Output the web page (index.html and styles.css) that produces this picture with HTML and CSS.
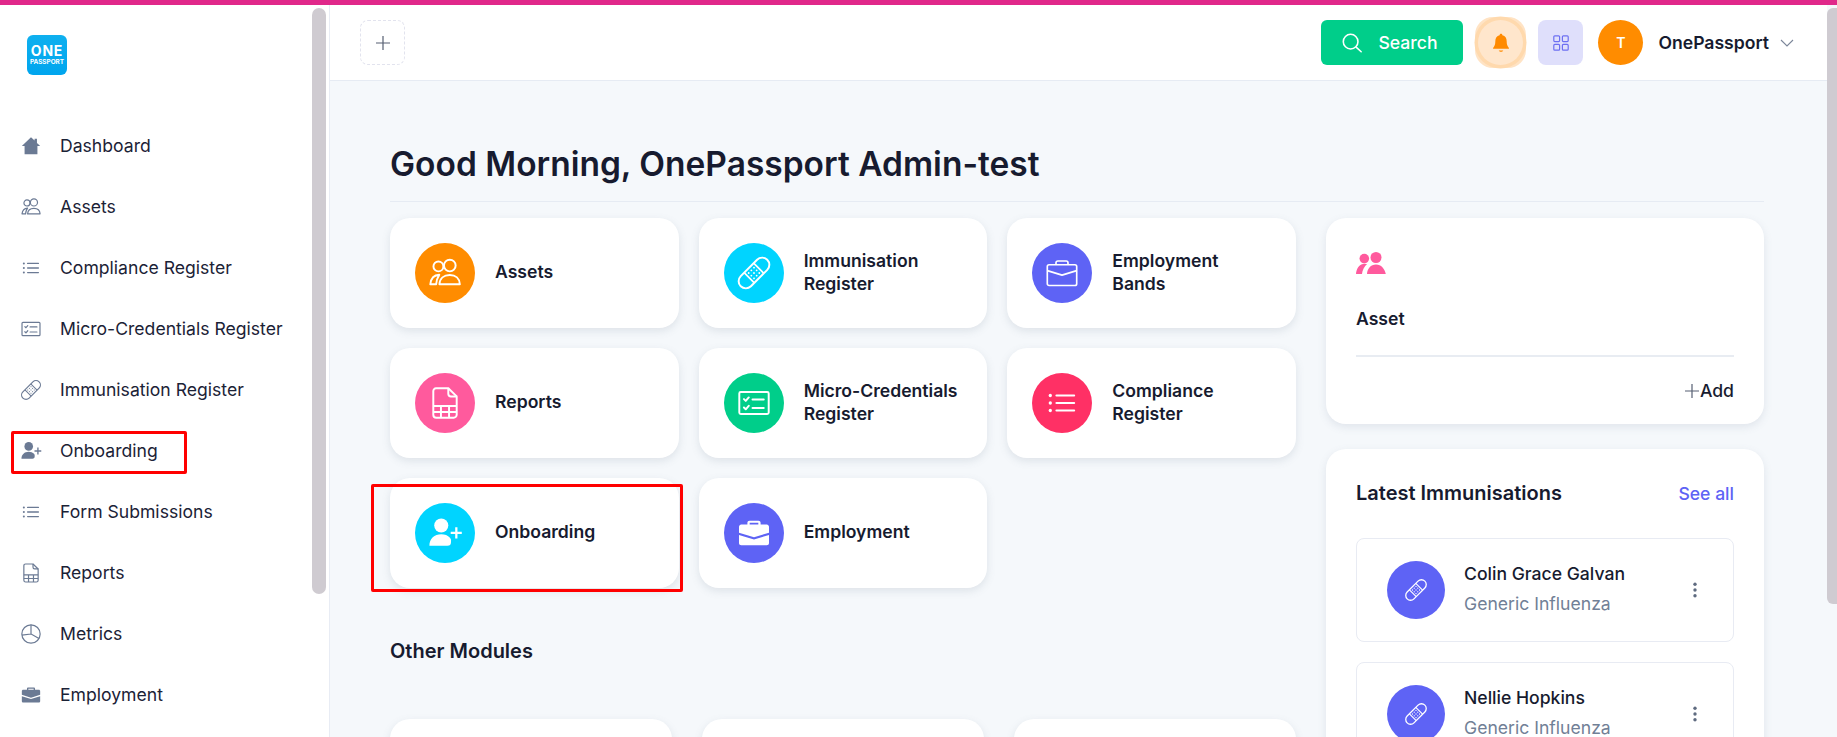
FILE: index.html
```html
<!DOCTYPE html>
<html lang="en">
<head>
<meta charset="utf-8">
<title>OnePassport</title>
<link rel="stylesheet" href="styles.css">
</head>
<body>
<svg class="sprite" xmlns="http://www.w3.org/2000/svg">
  <symbol id="i-home" viewBox="0 0 24 24"><path fill="currentColor" d="M12 2.500 2 12h3v9h14v-9h3l-3.500-3.400V4h-2.600v2.100z"/></symbol>
  <symbol id="i-people" viewBox="0 0 24 24"><g fill="none" stroke="currentColor" stroke-width="1.300" stroke-linejoin="round"><circle cx="7.600" cy="7.600" r="3.300"/><circle cx="15.200" cy="7" r="3.900"/><path d="M8.200 13.200c-3.600.2-5.600 2.600-6 6.300h3.900c.2-2.500 1-4.600 2.100-6.300z"/><path d="M8.300 19.500c.2-3.800 3-6.100 6.900-6.100s6.500 2.300 6.700 6.100z"/></g></symbol>
  <symbol id="i-people-solid" viewBox="0 0 30 22"><circle cx="8.300" cy="6.600" r="4.800" fill="currentColor"/><circle cx="20" cy="5.500" r="5.500" fill="currentColor"/><path fill="currentColor" d="M0 22c.3-5 3-9.800 7.400-10.100h3.700C8.300 14.500 6.300 18 6 22zM11 22c.3-5.500 3.800-9.600 9-9.600s8.700 4.100 9.800 9.600z"/></symbol>
  <symbol id="i-list" viewBox="0 0 24 24"><g fill="currentColor"><circle cx="4.200" cy="7" r="1.100"/><circle cx="4.200" cy="12" r="1.100"/><circle cx="4.200" cy="17" r="1.100"/><rect x="7.600" y="6.300" width="13.200" height="1.400" rx=".7"/><rect x="7.600" y="11.300" width="13.200" height="1.400" rx=".7"/><rect x="7.600" y="16.300" width="13.200" height="1.400" rx=".7"/></g></symbol>
  <symbol id="i-card" viewBox="0 0 24 24"><g fill="none" stroke="currentColor" stroke-width="1.300" stroke-linecap="round" stroke-linejoin="round"><rect x="2.200" y="4.700" width="19.600" height="14.600" rx="1"/><path d="M5.300 9.400l1.200 1.200 2-2.300M5.300 15l1.200 1.200 2-2.300M11 9.700h7.500M11 15.300h7.500"/></g></symbol>
  <symbol id="i-bandage" viewBox="0 0 24 24"><g transform="rotate(-45 12 12)"><rect x="-.5" y="7.200" width="25" height="9.600" rx="4.800" fill="none" stroke="currentColor" stroke-width="1.300"/><path d="M7.500 7.200v9.600M16.500 7.200v9.600" stroke="currentColor" stroke-width="1.100"/><g fill="currentColor"><circle cx="9.500" cy="9.500" r=".6"/><circle cx="12" cy="9.500" r=".6"/><circle cx="14.500" cy="9.500" r=".6"/><circle cx="9.500" cy="12" r=".6"/><circle cx="12" cy="12" r=".6"/><circle cx="14.500" cy="12" r=".6"/><circle cx="9.500" cy="14.500" r=".6"/><circle cx="12" cy="14.500" r=".6"/><circle cx="14.500" cy="14.500" r=".6"/></g></g></symbol>
  <symbol id="i-userplus" viewBox="0 0 24 24"><g fill="currentColor"><circle cx="9.500" cy="7" r="4.700"/><path d="M1.600 20.500c0-4.600 3.400-7.600 7.900-7.600 2.300 0 4.400.8 5.800 2.200 1 1 .7 2.200.7 3 0 1.500-.8 2.400-2.400 2.400z"/><path d="M18.800 8.200h1.500v3h2.900v1.500h-2.900v3h-1.500v-3h-3v-1.500h3z"/></g></symbol>
  <symbol id="i-file" viewBox="0 0 24 24"><g fill="none" stroke="currentColor" stroke-width="1.300" stroke-linejoin="round"><path d="M6 2.200h8.200v3.600c0 1 .8 1.800 1.800 1.800h3.800v12.200c0 1.200-1 2-2 2H6.200c-1.100 0-2-.9-2-2V4c0-1 .8-1.800 1.800-1.800z"/><path d="M14.200 2.200l5.600 5.400M4.200 14h15.600M4.200 18h15.600M9.300 14v7.800M14.700 14v7.800"/></g></symbol>
  <symbol id="i-pie" viewBox="0 0 24 24"><g fill="none" stroke="currentColor" stroke-width="1.300"><circle cx="12" cy="12" r="10"/><path d="M12 2v10l8.700 5M12 12l-9.900 1.300"/></g></symbol>
  <symbol id="i-case" viewBox="0 0 24 24"><path fill="currentColor" fill-rule="evenodd" d="M9 3.800h6c.8 0 1.400.6 1.400 1.400v1.200h4.100c.8 0 1.500.7 1.500 1.500v3.900l-10 3.100-10-3.100V7.900c0-.8.700-1.500 1.500-1.500h4.100V5.200c0-.8.600-1.400 1.400-1.400zm.1 1.300v1.300h5.800V5.100zM2 13.300l10 3.100 10-3.100v5.400c0 .9-.7 1.500-1.500 1.500h-17c-.8 0-1.500-.6-1.500-1.500z"/></symbol>
  <symbol id="i-case-line" viewBox="0 0 24 24"><g fill="none" stroke="currentColor" stroke-width="1.100" stroke-linejoin="round"><rect x="2.200" y="6.500" width="19.600" height="13.800" rx="1.200"/><path d="M8 6.500V5.200c0-.7.500-1.200 1.200-1.200h5.600c.7 0 1.200.5 1.200 1.200v1.300M2.200 10.400l9.800 3 9.800-3"/></g></symbol>
  <symbol id="i-search" viewBox="0 0 24 24"><g fill="none" stroke="currentColor" stroke-width="1.700" stroke-linecap="round"><circle cx="10.500" cy="10.500" r="8"/><path d="M16.500 16.500l5.500 5"/></g></symbol>
  <symbol id="i-bell" viewBox="0 0 24 24"><path fill="currentColor" d="M12 1.500c1 0 1.700.7 1.700 1.800 3.400.8 5.100 3.500 5.100 7 0 4.100.8 6.300 2.700 8.200v1H2.500v-1c1.900-1.900 2.700-4.100 2.700-8.200 0-3.500 1.700-6.200 5.100-7 0-1.100.7-1.800 1.700-1.800zM9.300 21.500h5.400c-.4 1-1.500 1.500-2.700 1.500s-2.300-.5-2.700-1.500z"/></symbol>
  <symbol id="i-grid" viewBox="0 0 16 16"><g fill="none" stroke="currentColor" stroke-width="1.200"><rect x=".8" y=".8" width="5.800" height="5.800" rx="1"/><rect x="9.400" y=".8" width="5.800" height="5.800" rx="1"/><rect x=".8" y="9.400" width="5.800" height="5.800" rx="1"/><rect x="9.400" y="9.400" width="5.800" height="5.800" rx="1"/></g></symbol>
  <symbol id="i-chevron" viewBox="0 0 16 10"><path d="M2 2l6 6 6-6" fill="none" stroke="currentColor" stroke-width="1.100"/></symbol>
  <symbol id="i-plus" viewBox="0 0 14 14"><path d="M7 0v14M0 7h14" stroke="currentColor" stroke-width="1.200"/></symbol>
  <symbol id="i-kebab" viewBox="0 0 4 16"><g fill="currentColor"><circle cx="2" cy="2.200" r="1.700"/><circle cx="2" cy="8" r="1.700"/><circle cx="2" cy="13.800" r="1.700"/></g></symbol>
</svg>

<div class="topline"></div>
<div class="shell">
  <aside class="sidebar">
    <div class="logo"><span class="logo-one">ONE</span><span class="logo-pass">PASSPORT</span></div>
    <nav class="nav">
      <a class="nav-item"><svg class="nav-icon"><use href="#i-home"/></svg><span>Dashboard</span></a>
      <a class="nav-item"><svg class="nav-icon"><use href="#i-people"/></svg><span>Assets</span></a>
      <a class="nav-item"><svg class="nav-icon"><use href="#i-list"/></svg><span>Compliance Register</span></a>
      <a class="nav-item"><svg class="nav-icon"><use href="#i-card"/></svg><span>Micro-Credentials Register</span></a>
      <a class="nav-item"><svg class="nav-icon"><use href="#i-bandage"/></svg><span>Immunisation Register</span></a>
      <a class="nav-item"><svg class="nav-icon"><use href="#i-userplus"/></svg><span>Onboarding</span><i class="mark mark-nav"></i></a>
      <a class="nav-item"><svg class="nav-icon"><use href="#i-list"/></svg><span>Form Submissions</span></a>
      <a class="nav-item"><svg class="nav-icon"><use href="#i-file"/></svg><span>Reports</span></a>
      <a class="nav-item"><svg class="nav-icon"><use href="#i-pie"/></svg><span>Metrics</span></a>
      <a class="nav-item"><svg class="nav-icon"><use href="#i-case"/></svg><span>Employment</span></a>
    </nav>
    <div class="thumb thumb-side"></div>
  </aside>

  <div class="main">
    <header class="header">
      <button class="add-btn"><svg class="add-icon"><use href="#i-plus"/></svg></button>
      <div class="header-right">
        <button class="search-btn"><svg class="search-icon"><use href="#i-search"/></svg><span>Search</span></button>
        <div class="bell"><svg class="bell-icon"><use href="#i-bell"/></svg></div>
        <div class="apps"><svg class="apps-icon"><use href="#i-grid"/></svg></div>
        <div class="avatar">T</div>
        <div class="user-name">OnePassport</div>
        <svg class="chevron"><use href="#i-chevron"/></svg>
      </div>
    </header>

    <main class="content">
      <h1 class="greeting">Good Morning, OnePassport Admin-test</h1>
      <div class="columns">
        <section class="left">
          <div class="tiles">
            <div class="tile"><div class="disc orange"><svg class="disc-icon"><use href="#i-people"/></svg></div><div class="tile-label">Assets</div></div>
            <div class="tile"><div class="disc cyan"><svg class="disc-icon"><use href="#i-bandage"/></svg></div><div class="tile-label">Immunisation Register</div></div>
            <div class="tile"><div class="disc indigo"><svg class="disc-icon"><use href="#i-case-line"/></svg></div><div class="tile-label">Employment Bands</div></div>
            <div class="tile"><div class="disc pink"><svg class="disc-icon"><use href="#i-file"/></svg></div><div class="tile-label">Reports</div></div>
            <div class="tile"><div class="disc green"><svg class="disc-icon"><use href="#i-card"/></svg></div><div class="tile-label">Micro-Credentials Register</div></div>
            <div class="tile"><div class="disc red"><svg class="disc-icon"><use href="#i-list"/></svg></div><div class="tile-label">Compliance Register</div></div>
            <div class="tile"><div class="disc cyan"><svg class="disc-icon"><use href="#i-userplus"/></svg></div><div class="tile-label">Onboarding</div><i class="mark mark-tile"></i></div>
            <div class="tile"><div class="disc indigo"><svg class="disc-icon"><use href="#i-case"/></svg></div><div class="tile-label">Employment</div></div>
          </div>
          <h2 class="section-title">Other Modules</h2>
          <div class="others">
            <div class="other"></div>
            <div class="other"></div>
            <div class="other"></div>
          </div>
        </section>

        <section class="right">
          <div class="panel asset-panel">
            <svg class="asset-icon"><use href="#i-people-solid"/></svg>
            <div class="asset-title">Asset</div>
            <div class="asset-rule"></div>
            <div class="asset-add"><svg class="asset-plus"><use href="#i-plus"/></svg><span>Add</span></div>
          </div>
          <div class="panel latest-panel">
            <div class="latest-head"><h3 class="latest-title">Latest Immunisations</h3><a class="see-all">See all</a></div>
            <div class="entry">
              <div class="entry-disc"><svg class="entry-icon"><use href="#i-bandage"/></svg></div>
              <div class="entry-text"><div class="entry-name">Colin Grace Galvan</div><div class="entry-sub">Generic Influenza</div></div>
              <svg class="kebab"><use href="#i-kebab"/></svg>
            </div>
            <div class="entry">
              <div class="entry-disc"><svg class="entry-icon"><use href="#i-bandage"/></svg></div>
              <div class="entry-text"><div class="entry-name">Nellie Hopkins</div><div class="entry-sub">Generic Influenza</div></div>
              <svg class="kebab"><use href="#i-kebab"/></svg>
            </div>
          </div>
        </section>
      </div>
    </main>
    <div class="thumb thumb-main"></div>
  </div>
</div>
</body>
</html>
```

FILE: styles.css
```css
* { box-sizing: border-box; }
html, body { margin: 0; height: 737px; overflow: hidden; }
body { font-family: Inter, "Liberation Sans", sans-serif; color: #171b2f; background: #f5f8fb; }
.sprite { display: none; }
.topline { height: 5px; background: #e0288a; }
.shell { display: flex; height: 732px; }

.sidebar { position: relative; flex: 0 0 330px; background: #fff; border-right: 1px solid #e8ecf4; padding-top: 30px; overflow: hidden; }
.logo { width: 40px; height: 40px; margin-left: 27px; border-radius: 6px; background: linear-gradient(180deg, #0fb0ef, #00a5ee); color: #fff; display: flex; flex-direction: column; align-items: center; justify-content: center; font-weight: 700; line-height: 1; }
.logo-one { font-size: 14px; letter-spacing: .8px; }
.logo-pass { font-size: 6.4px; margin-top: 1px; }
.nav { margin-top: 40px; }
.nav-item { position: relative; display: flex; align-items: center; height: 61px; padding-left: 20px; gap: 18px; font-size: 17.6px; font-weight: 400; color: #1b2236; }
.nav-icon { width: 22px; height: 22px; color: #6b7a94; flex: none; }

.thumb { position: absolute; background: #cfcbd1; }
.thumb-side { left: 312px; top: 3px; width: 14px; height: 586px; border-radius: 7px; }
.thumb-main { right: 0; top: 3px; width: 10px; height: 596px; border-radius: 6px 0 0 6px; }

.mark { position: absolute; border: 3px solid #f00; border-radius: 2px; pointer-events: none; }
.mark-nav { left: 11px; top: 11px; width: 176px; height: 43px; }
.mark-tile { left: -19px; top: 6px; width: 312px; height: 108px; }

.main { position: relative; flex: 1; min-width: 0; overflow: hidden; }
.header { height: 76px; width: 1497px; background: #fff; border-bottom: 1px solid #e6ebf3; padding: 15px 32px 15px 30px; display: flex; align-items: flex-start; justify-content: space-between; }
.add-btn { width: 45px; height: 45px; padding: 0; background: #fff; border: 1px dashed #e2e3ee; border-radius: 8px; display: flex; align-items: center; justify-content: center; }
.add-icon { width: 14px; height: 14px; color: #565f72; }
.header-right { display: flex; align-items: center; gap: 15px; height: 45px; }
.search-btn { width: 142px; height: 45px; border: 0; border-radius: 6px; background: #00ce8a; color: #fff; display: flex; align-items: center; padding: 0 0 0 20px; gap: 15px; font: 500 17.6px Inter, sans-serif; }
.search-icon { width: 22px; height: 22px; flex: none; }
.bell { position: relative; width: 45px; height: 45px; display: flex; align-items: center; justify-content: center; }
.bell::before { content: ""; position: absolute; inset: -3px; border-radius: 18px; background: #ffe3c4; }
.bell::after { content: ""; position: absolute; inset: 0; border-radius: 50%; background: #ffe6cc; box-shadow: 0 0 0 3.5px #ffd9ad; }
.bell-icon { position: relative; z-index: 1; width: 20px; height: 21px; color: #ff8a00; }
.apps { width: 45px; height: 45px; border-radius: 8px; background: #dfdffb; display: flex; align-items: center; justify-content: center; }
.apps-icon { width: 16px; height: 16px; color: #6d70f2; }
.avatar { width: 45px; height: 45px; border-radius: 50%; background: #ff8c00; color: #fff; display: flex; align-items: center; justify-content: center; font-size: 14px; font-weight: 600; }
.user-name { font-size: 17.6px; font-weight: 600; }
.chevron { width: 16px; height: 10px; color: #7b8699; margin-left: -5px; }

.content { padding: 63px 63px 0 60px; width: 1497px; }
.greeting { margin: 0; height: 58px; font-size: 33.5px; line-height: 40px; font-weight: 600; color: #171b2f; border-bottom: 1px solid #e6ebf3; }
.columns { display: grid; grid-template-columns: 906px 438px; gap: 30px; margin-top: 16px; }

.tiles { display: grid; grid-template-columns: repeat(3, 1fr); grid-auto-rows: 110px; gap: 20px; }
.tile { position: relative; display: flex; align-items: center; gap: 20px; padding-left: 25px; background: #fff; border-radius: 20px; box-shadow: 0 3px 8px rgba(100, 116, 139, .16); }
.disc { width: 60px; height: 60px; flex: none; border-radius: 50%; color: #fff; display: flex; align-items: center; justify-content: center; }
.disc-icon { width: 36px; height: 36px; }
.orange { background: #ff8c00; }
.cyan { background: #00d4ff; }
.indigo { background: #5e63f5; }
.pink { background: #ff5a9d; }
.green { background: #00ce8a; }
.red { background: #ff3065; }
.tile-label { max-width: 160px; font-size: 17.6px; line-height: 23px; font-weight: 600; color: #171b2f; padding-bottom: 3px; }

.section-title { margin: 50px 0 0; font-size: 20px; line-height: 26px; font-weight: 600; }
.others { display: grid; grid-template-columns: repeat(3, 1fr); gap: 30px; margin-top: 55px; }
.other { height: 110px; background: #fff; border-radius: 20px; box-shadow: 0 3px 8px rgba(100, 116, 139, .16); }

.right { display: flex; flex-direction: column; gap: 25px; }
.panel { background: #fff; border-radius: 20px; box-shadow: 0 3px 8px rgba(100, 116, 139, .14); padding: 30px; }
.asset-panel { height: 206px; }
.asset-icon { display: block; width: 30px; height: 22px; color: #ff5a9d; margin-top: 4px; }
.asset-title { font-size: 17.6px; line-height: 24px; font-weight: 600; margin-top: 33px; }
.asset-rule { height: 2px; background: #e8ecf2; margin-top: 24px; }
.asset-add { display: flex; align-items: center; justify-content: flex-end; gap: 1px; margin-top: 22px; font-size: 17.6px; line-height: 24px; font-weight: 500; }
.asset-plus { width: 14px; height: 14px; color: #565f72; }

.latest-head { display: flex; justify-content: space-between; align-items: center; height: 28px; }
.latest-title { margin: 0; font-size: 20px; font-weight: 600; }
.see-all { font-size: 17.6px; font-weight: 500; color: #5e63f5; }
.entry { display: flex; align-items: center; height: 104px; margin-top: 31px; padding: 0 36px 0 30px; border: 1px solid #e8ebf3; border-radius: 8px; }
.entry + .entry { margin-top: 20px; }
.entry-disc { width: 58px; height: 58px; border-radius: 50%; background: #5e63f5; color: #fff; display: flex; align-items: center; justify-content: center; flex: none; }
.entry-icon { width: 24px; height: 24px; }
.entry-text { flex: 1; margin-left: 19px; margin-top: -3px; }
.entry-name { font-size: 17.6px; line-height: 24px; font-weight: 500; }
.entry-sub { font-size: 17.6px; line-height: 24px; margin-top: 6px; color: #718096; }
.kebab { width: 4px; height: 16px; color: #5f6b80; flex: none; }
```
